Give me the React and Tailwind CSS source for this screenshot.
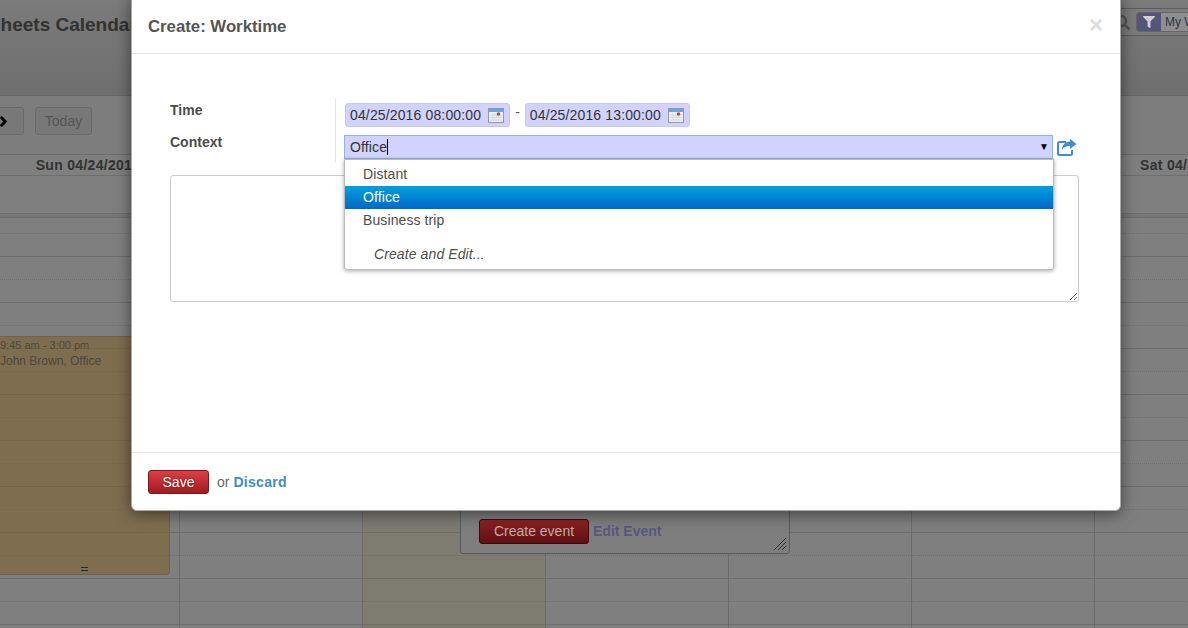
import React from "react";
import { FaFilter, FaSearch, FaChevronRight } from "react-icons/fa";

const days = ["Sun 04/24/2016", "Mon 04/25/2016", "Tue 04/26/2016", "Wed 04/27/2016", "Thu 04/28/2016", "Fri 04/29/2016", "Sat 04/30/2016"];
// row height 23, every other line is dotted
const slots = Array.from({ length: 18 }, (_, i) => i);

const CalendarIcon = () => (
  <svg width="16" height="15" viewBox="0 0 16 15" className="shrink-0">
    <rect x="0.5" y="0.5" width="15" height="14" fill="#eef1f4" stroke="#8d9aa8" />
    <rect x="1" y="1" width="14" height="3" fill="#6fa6d8" />
    <path d="M2 7h12M2 9.5h12M2 12h12M5 5v8M8 5v8M11 5v8" stroke="#d5dbe1" strokeWidth="1" />
    <circle cx="10.5" cy="6" r="1.8" fill="#c8413f" />
  </svg>
);

const ShareIcon = () => (
  <svg width="20" height="18" viewBox="0 0 20 18" className="shrink-0">
    <path d="M9 4H2.5A1.5 1.5 0 0 0 1 5.5v10A1.5 1.5 0 0 0 2.5 17h11a1.5 1.5 0 0 0 1.5-1.5V12" fill="none" stroke="#428bca" strokeWidth="2" />
    <path d="M13 1l6.500 5-6.500 5V8C9 8 6.500 9 5 12c0-5 3-8 8-8.500z" fill="#428bca" />
  </svg>
);

const DateInput = ({ value }) => (
  <div className="flex h-6 items-center gap-[7px] rounded-[3px] border border-[#c6c6ee] bg-[#d2d2ff] pl-[4px] pr-[5px] text-[#333]">
    <span className="tracking-[0.14px]">{value}</span>
    <CalendarIcon />
  </div>
);

const Calendar = () => (
  <div className="relative h-full overflow-hidden bg-white">
    <div className="h-[96px] border-b border-[#ccc] bg-gradient-to-b from-[#f6f6f6] to-[#dedede]">
      <div className="ml-[-54px] whitespace-nowrap pt-[13px] text-[19px] leading-6 font-bold text-[#666]">
        Timesheets Calendar
      </div>
    </div>
    <div className="absolute left-[900px] right-0 top-[8px] h-[28px] border-y border-[#bbb] bg-[#f8f8f8]" />
    <div className="flex h-[58px] items-start bg-[#fafafa] pt-[11px]">
      <div className="ml-[-8px] flex h-7 w-8 items-center justify-start rounded-[3px] border border-[#d5d5d5] bg-[#f0f0f0] pl-[5px] text-[11px] text-black">
        <FaChevronRight stroke="currentColor" strokeWidth={50} />
      </div>
      <div className="ml-[11px] flex h-7 w-[57px] items-center justify-center rounded-[3px] border border-[#d5d5d5] bg-[#f0f0f0] text-sm text-[#aaa]">
        Today
      </div>
    </div>
    <div className="ml-[-3px] flex">
      {days.map((day, d) => (
        <div
          key={day}
          className={`shrink-0 border-r border-[#d8d8d8] ${d === 2 ? "bg-[#fcf8e3]" : ""} ${d === 6 ? "w-[191px]" : "w-[183px]"}`}
        >
          <div className="flex h-[22px] items-center justify-center border-y border-[#ddd] bg-white text-sm font-bold tracking-[0.3px] text-[#666]">
            {day}
          </div>
          <div className="h-[38px] border-b border-[#ddd] bg-white" />
          <div className="h-[4px] border-b border-[#ddd] bg-[#eee]" />
          <div className="h-[16px] border-b border-dotted border-[#ddd]" />
          {slots.map((s) => (
            <div
              key={s}
              className={`h-[23px] border-b border-[#ddd] ${s % 2 === 1 ? "border-dotted" : "border-solid"}`}
            />
          ))}
        </div>
      ))}
    </div>

    {/* event block */}
    <div className="absolute left-[-10px] top-[336px] h-[239px] w-[180px] rounded-br-[3px] border border-[#f0c080] bg-[#ffc261]/60 pl-[9px] text-[#9a9080]">
      <div className="whitespace-nowrap pt-[1px] text-[11px] leading-[14px]">9:45 am - 3:00 pm</div>
      <div className="whitespace-nowrap pt-[2px] text-xs leading-[14px]">John Brown, Office</div>
      <div className="absolute bottom-[3px] left-[90px] h-[4px] w-[7px] border-y border-[#555]" />
    </div>
  </div>
);

// these sit above the backdrop in the source page, so they keep more of their colour
const RaisedBits = () => (
  <>
    <div className="absolute left-[460px] top-[400px] h-[154px] w-[330px] rounded-[3px] border border-[#5a5a5a] bg-[#7e7e7e]">
      <div className="absolute left-[18px] top-[118px] flex items-center gap-[4px]">
        <div className="flex h-[25px] w-[110px] items-center justify-center rounded-[3px] border border-[#3a0a0a] bg-gradient-to-b from-[#8e2226] to-[#5f0f10] pb-[2px] text-sm text-[#c0aaaa]">
          Create event
        </div>
        <span className="mt-[-2px] text-sm font-bold text-[#58587f]">Edit Event</span>
      </div>
      <svg width="14" height="14" viewBox="0 0 14 14" className="absolute bottom-[2px] right-[2px]">
        <path d="M1 13L13 1M5 13L13 5M9 13L13 9" stroke="#333" strokeWidth="1" />
      </svg>
    </div>

    <div className="absolute left-[1115px] top-[12px] flex h-[20px] items-center">
      <FaSearch className="text-[15px] text-[#555]" />
      <div className="ml-[6px] flex h-[20px] w-[60px] items-center overflow-hidden rounded-[3px] border border-[#666] bg-[#8e8e8e]">
        <div className="flex h-full w-[24px] shrink-0 items-center justify-center bg-[#55557a] text-[#cfcfcf]">
          <FaFilter className="text-[12px]" />
        </div>
        <span className="ml-[4px] whitespace-nowrap text-xs text-[#33334a]">My Worktime</span>
      </div>
    </div>
  </>
);

const App = () => {
  return (
    <div
      className="relative h-screen w-full overflow-hidden text-sm text-[#4c4c4c]"
      style={{ fontFamily: '"Liberation Sans", Arial, sans-serif' }}
    >
      <Calendar />
      <div className="absolute inset-0 bg-black/50" />
      <RaisedBits />

      <div className="absolute left-[131px] top-[-6px] flex h-[517px] w-[990px] flex-col rounded-md border border-[#aaa] bg-white shadow-[0_3px_16px_rgba(0,0,0,0.5)]">
        <div className="flex h-[59px] shrink-0 items-center justify-between border-b border-[#e5e5e5] pl-[16px] pr-[17px] pt-[5px]">
          <h4 className="text-[16.75px] font-bold text-[#555]">Create: Worktime</h4>
          <span className="mt-[-4px] text-[24px] font-bold leading-none text-[#dcdcdc]">×</span>
        </div>

        <div className="relative flex-1 pl-[38px] pr-[41px] pt-[44px]">
          <div className="flex h-[65px]">
            <div className="w-[165px] shrink-0 font-bold">
              <div className="pt-[2px]">Time</div>
              <div className="pt-[12px]">Context</div>
            </div>
            <div className="relative flex-1 border-l border-[#e5e5e5] pl-[9px] pt-[5px]">
              <div className="flex items-start gap-[5px]">
                <DateInput value="04/25/2016 08:00:00" />
                <span className="mt-[-1px] text-[#555]">-</span>
                <DateInput value="04/25/2016 13:00:00" />
              </div>
              <div className="ml-[-1px] mt-[8px] flex w-[733px] items-center gap-[4px]">
                <div className="flex h-6 w-[709px] items-center justify-between border border-[#8fb4e8] bg-[#d2d2ff] pl-[5px] pr-[3px] text-[#333]">
                  <span className="flex items-center tracking-[0.14px]">
                    Office
                    <span className="h-[16px] w-px bg-black" />
                  </span>
                  <span className="text-[10px] text-black">▼</span>
                </div>
                <ShareIcon />
              </div>
            </div>
          </div>

          <textarea
            readOnly
            className="mt-[12px] block h-[127px] w-[909px] rounded-[3px] border border-[#ccc] bg-white outline-none"
          />

          {/* autocomplete menu */}
          <div className="absolute left-[212px] top-[105px] h-[111px] w-[710px] rounded-b-[3px] border border-[#bbb] bg-white py-[3px] tracking-[0.1px] shadow-[0_1px_4px_rgba(0,0,0,0.35)]">
            <div className="flex h-[23px] items-center pb-px pl-[18px]">Distant</div>
            <div className="flex h-[23px] items-center bg-gradient-to-b from-[#009fdf] to-[#0068c8] pb-px pl-[18px] text-white">
              Office
            </div>
            <div className="flex h-[23px] items-center pb-px pl-[18px]">Business trip</div>
            <div className="mt-[11px] flex h-[23px] items-center pb-px pl-[29px] italic">Create and Edit...</div>
          </div>
        </div>

        <div className="flex h-[58px] shrink-0 items-center border-t border-[#e5e5e5] pl-[16px]">
          <button className="h-6 w-[61px] rounded-[3px] border border-[#7a1a1a] bg-gradient-to-b from-[#dc3f45] to-[#a01c1f] text-sm text-white [text-shadow:0_0_2px_rgba(90,0,0,0.8)]">
            Save
          </button>
          <span className="ml-2 text-[#666]">or</span>
          <a className="ml-1 font-bold tracking-[0.28px] text-[#428bca]">Discard</a>
        </div>
      </div>
    </div>
  );
};

export default App;
